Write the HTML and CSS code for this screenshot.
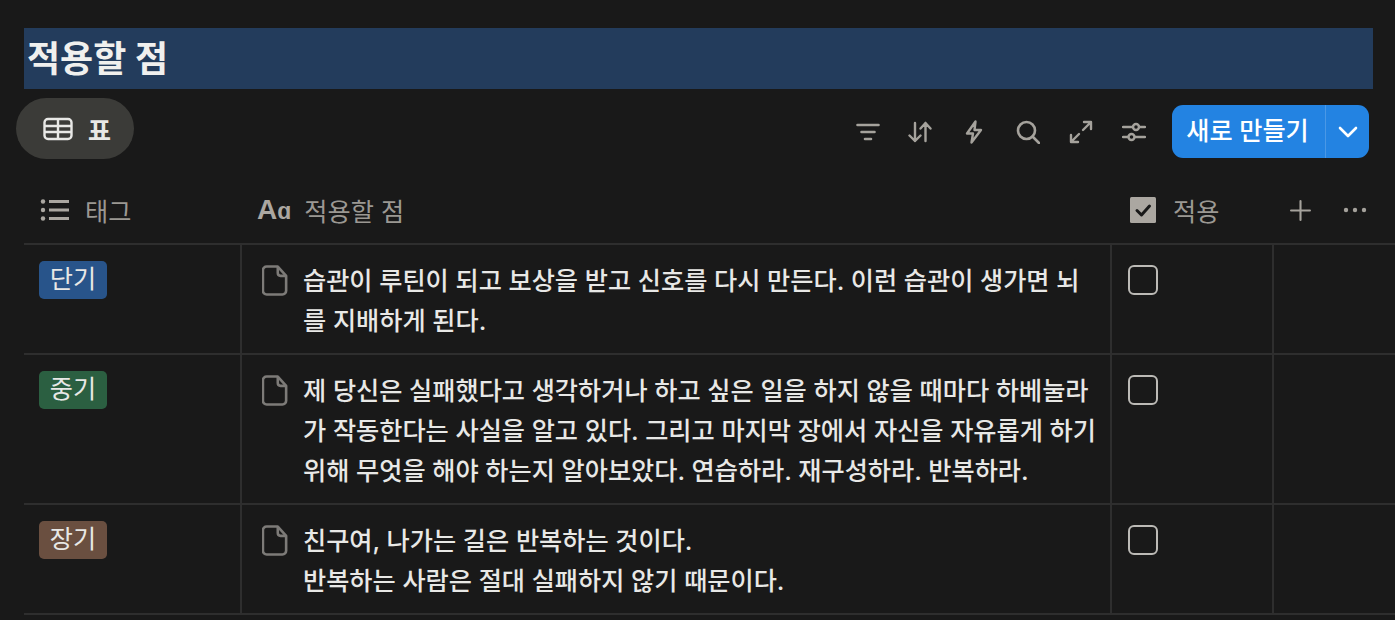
FILE: index.html
```html
<!DOCTYPE html>
<html lang="ko">
<head>
  <meta charset="UTF-8">
  <title>적용할 점</title>
  <link rel="stylesheet" href="styles.css">
</head>
<body>
  <h1 class="titulo"><span>적용할 점</span></h1>

  <div class="barra">
    <div class="aba">
      <svg class="ico-tabela" viewBox="0 0 30 24" fill="none" stroke="currentColor" stroke-width="2.4">
        <rect x="1.5" y="2" width="27" height="20" rx="3.5"/>
        <path d="M1.5 9h27M1.5 15h27M15 2v20"/>
      </svg>
      <span>표</span>
    </div>
    <div class="acoes">
      <svg class="ico ico-filtro" viewBox="0 0 24 24" fill="none" stroke="currentColor" stroke-width="2.6" stroke-linecap="round"><path d="M1.500 5h21M5.500 12h13M9 19h6"/></svg>
      <svg class="ico ico-largo" viewBox="0 0 24 24" fill="none" stroke="currentColor" stroke-width="2.4" stroke-linecap="round" stroke-linejoin="round"><path d="M7 3v18M1.500 15.500 7 21l5.500-5.500M17.500 21V3M12.500 8.500 17.500 3l5 5.500"/></svg>
      <svg class="ico ico-largo" viewBox="0 0 24 24" fill="none" stroke="currentColor" stroke-width="2.4" stroke-linejoin="round"><path d="M13.500 1.500 5 13.500h6L9.500 22.500 19 10h-6.500z"/></svg>
      <svg class="ico" viewBox="0 0 24 24" fill="none" stroke="currentColor" stroke-width="2.600" stroke-linecap="round"><circle cx="10.500" cy="10.500" r="8.500"/><path d="M16.500 16.500 23 23"/></svg>
      <svg class="ico" viewBox="0 0 24 24" fill="none" stroke="currentColor" stroke-width="2.400" stroke-linecap="round" stroke-linejoin="round"><path d="M14 10 22 2M15 2h7v7M10 14l-8 8M2 15v7h7"/></svg>
      <svg class="ico ico-ajustes" viewBox="0 0 24 24" fill="none" stroke="currentColor" stroke-width="2.400" stroke-linecap="round"><path d="M1 7h10M17 7h6M1 17h5M13 17h10"/><circle cx="14" cy="7" r="3"/><circle cx="9.500" cy="17" r="3"/></svg>
      <div class="novo">
        <span class="novo-texto">새로 만들기</span>
        <span class="novo-seta">
          <svg viewBox="0 0 20 12" fill="none" stroke="currentColor" stroke-width="2.6" stroke-linecap="round" stroke-linejoin="round"><path d="M2 2l8 8 8-8"/></svg>
        </span>
      </div>
    </div>
  </div>

  <div class="tabela">
    <div class="cabecalho">
      <div class="cab-item">
        <svg class="ico-cab" viewBox="0 0 30 24" fill="currentColor"><circle cx="3" cy="3.500" r="2.200"/><circle cx="3" cy="12" r="2.200"/><circle cx="3" cy="20.500" r="2.200"/><rect x="9" y="2" width="20" height="3"/><rect x="9" y="10.500" width="20" height="3"/><rect x="9" y="19" width="20" height="3"/></svg>
        <span>태그</span>
      </div>
      <div class="cab-item cab-nome">
        <span class="aa">A<i>ɑ</i></span>
        <span>적용할 점</span>
      </div>
      <div class="cab-item cab-check">
        <svg class="ico-check" viewBox="0 0 26 26"><rect width="26" height="26" rx="1.500" fill="#aba7a1"/><path d="M7 13.500l4.500 4.500 8-9" fill="none" stroke="#191919" stroke-width="3" stroke-linecap="round" stroke-linejoin="round"/></svg>
        <span>적용</span>
      </div>
      <div class="cab-extra">
        <svg class="ico-mais" viewBox="0 0 20 20" fill="none" stroke="currentColor" stroke-width="2" stroke-linecap="round"><path d="M10 1v18M1 10h18"/></svg>
        <svg class="ico-pontos" viewBox="0 0 24 6" fill="currentColor"><circle cx="3" cy="3" r="2.200"/><circle cx="12" cy="3" r="2.200"/><circle cx="21" cy="3" r="2.200"/></svg>
      </div>
    </div>

    <div class="linha">
      <div class="cel cel-tag"><span class="tag tag-azul">단기</span></div>
      <div class="cel cel-nome">
        <svg class="ico-doc" viewBox="0 0 28 34" fill="none" stroke="#7d7b78" stroke-width="2.800" stroke-linejoin="round"><path d="M5 2h12l9 10v16a4 4 0 0 1-4 4H5a4 4 0 0 1-4-4V6a4 4 0 0 1 4-4z"/><path d="M17 2v7a3 3 0 0 0 3 3h6"/></svg>
        <p>습관이 루틴이 되고 보상을 받고 신호를 다시 만든다. 이런 습관이 생가면 뇌를 지배하게 된다.</p>
      </div>
      <div class="cel cel-check"><span class="caixa"></span></div>
      <div class="cel"></div>
    </div>

    <div class="linha">
      <div class="cel cel-tag"><span class="tag tag-verde">중기</span></div>
      <div class="cel cel-nome">
        <svg class="ico-doc" viewBox="0 0 28 34" fill="none" stroke="#7d7b78" stroke-width="2.800" stroke-linejoin="round"><path d="M5 2h12l9 10v16a4 4 0 0 1-4 4H5a4 4 0 0 1-4-4V6a4 4 0 0 1 4-4z"/><path d="M17 2v7a3 3 0 0 0 3 3h6"/></svg>
        <p>제 당신은 실패했다고 생각하거나 하고 싶은 일을 하지 않을 때마다 하베눌라가 작동한다는 사실을 알고 있다. 그리고 마지막 장에서 자신을 자유롭게 하기 위해 무엇을 해야 하는지 알아보았다. 연습하라. 재구성하라. 반복하라.</p>
      </div>
      <div class="cel cel-check"><span class="caixa"></span></div>
      <div class="cel"></div>
    </div>

    <div class="linha">
      <div class="cel cel-tag"><span class="tag tag-marrom">장기</span></div>
      <div class="cel cel-nome">
        <svg class="ico-doc" viewBox="0 0 28 34" fill="none" stroke="#7d7b78" stroke-width="2.800" stroke-linejoin="round"><path d="M5 2h12l9 10v16a4 4 0 0 1-4 4H5a4 4 0 0 1-4-4V6a4 4 0 0 1 4-4z"/><path d="M17 2v7a3 3 0 0 0 3 3h6"/></svg>
        <p>친구여, 나가는 길은 반복하는 것이다.<br>반복하는 사람은 절대 실패하지 않기 때문이다.</p>
      </div>
      <div class="cel cel-check"><span class="caixa"></span></div>
      <div class="cel"></div>
    </div>
  </div>
</body>
</html>
```

FILE: styles.css
```css
* {
  box-sizing: border-box;
}

html, body {
  height: 620px;
  overflow: hidden;
}

body {
  margin: 0;
  padding: 28px 0 0 24px;
  background: #191919;
  color: #e8e8e6;
  font-family: "Inter", "Noto Sans CJK KR", sans-serif;
}

.titulo {
  margin: 0;
  width: 1349px;
  height: 61px;
  padding: 2px 0 0 3px;
  background: #233c5c;
  color: #f0f0ee;
  font-size: 36px;
  font-weight: 700;
  line-height: 59px;
}

.barra {
  display: flex;
  align-items: flex-start;
  justify-content: space-between;
  width: 1353px;
  height: 61px;
  margin: 9px 0 0 -8px;
}

.aba {
  display: flex;
  align-items: center;
  gap: 15px;
  width: 118px;
  height: 61px;
  padding-left: 27px;
  border-radius: 31px;
  background: #3b3b38;
  color: #e8e8e6;
  font-size: 25px;
  font-weight: 700;
}

.ico-tabela {
  width: 30px;
  height: 24px;
}

.acoes {
  display: flex;
  align-items: center;
  margin-top: 7px;
  color: #a5a29c;
}

.ico {
  width: 24px;
  height: 24px;
  margin-right: 29px;
}

.ico-filtro {
  margin-right: 28px;
}

.ico-largo {
  margin-right: 30px;
}

.ico-ajustes {
  margin-right: 26px;
}

.novo {
  display: flex;
  width: 197px;
  height: 53px;
  border-radius: 11px;
  background: #2383e2;
  color: #fff;
  font-size: 25.2px;
  font-weight: 500;
}

.novo-texto {
  flex: 1;
  padding-right: 2px;
  line-height: 52px;
  text-align: center;
}

.novo-seta {
  display: flex;
  align-items: center;
  justify-content: center;
  width: 44px;
  border-left: 1px solid #4a98e6;
}

.novo-seta svg {
  width: 20px;
  height: 12px;
}

.cabecalho {
  display: grid;
  grid-template-columns: 218px 870px 162px 122px;
  height: 64px;
  margin-top: 22px;
  padding-bottom: 4px;
  border-bottom: 2px solid #2e2e2e;
  color: #9b9893;
  font-size: 25.2px;
}

.cab-item {
  display: flex;
  align-items: center;
  padding-left: 16px;
  gap: 15px;
}

.ico-cab {
  width: 30px;
  height: 24px;
  color: #aba7a1;
}

.aa {
  color: #aba7a1;
  font-family: "Liberation Sans", sans-serif;
  font-size: 28px;
  font-weight: 700;
  line-height: 1;
}

.aa i {
  font-size: 23px;
  font-style: normal;
}

.cab-nome {
  padding-left: 15px;
  gap: 13px;
}

.cab-check {
  padding-left: 18px;
  gap: 17px;
}

.ico-check {
  width: 26px;
  height: 26px;
}

.cab-extra {
  display: flex;
  align-items: center;
  padding-left: 16px;
  color: #a5a29c;
}

.ico-mais {
  width: 21px;
  height: 21px;
  margin-right: 32px;
}

.ico-pontos {
  width: 24px;
  height: 6px;
}

.linha {
  display: grid;
  grid-template-columns: 218px 870px 162px 122px;
  border-bottom: 2px solid #2e2e2e;
}

.cel {
  padding-top: 16px;
  padding-bottom: 12px;
  border-right: 2px solid #2e2e2e;
}

.cel:last-child {
  border-right: 0;
}

.cel-tag {
  padding-left: 15px;
}

.tag {
  display: inline-block;
  width: 68px;
  height: 38px;
  border-radius: 5px;
  font-size: 25.2px;
  line-height: 36px;
  text-align: center;
}

.tag-azul {
  background: #28548a;
}

.tag-verde {
  background: #2b5f41;
}

.tag-marrom {
  background: #6a4f40;
}

.cel-nome {
  display: flex;
  gap: 15px;
  padding-left: 20px;
  padding-right: 14px;
}

.ico-doc {
  flex: none;
  width: 26px;
  height: 33px;
  margin-top: 3px;
}

.cel-nome p {
  margin: 0;
  font-size: 25.2px;
  font-weight: 500;
  line-height: 40px;
}

.cel-check {
  padding-left: 16px;
}

.caixa {
  display: block;
  width: 30px;
  height: 30px;
  margin-top: 4px;
  border: 2px solid #bcbab6;
  border-radius: 6px;
}
```
